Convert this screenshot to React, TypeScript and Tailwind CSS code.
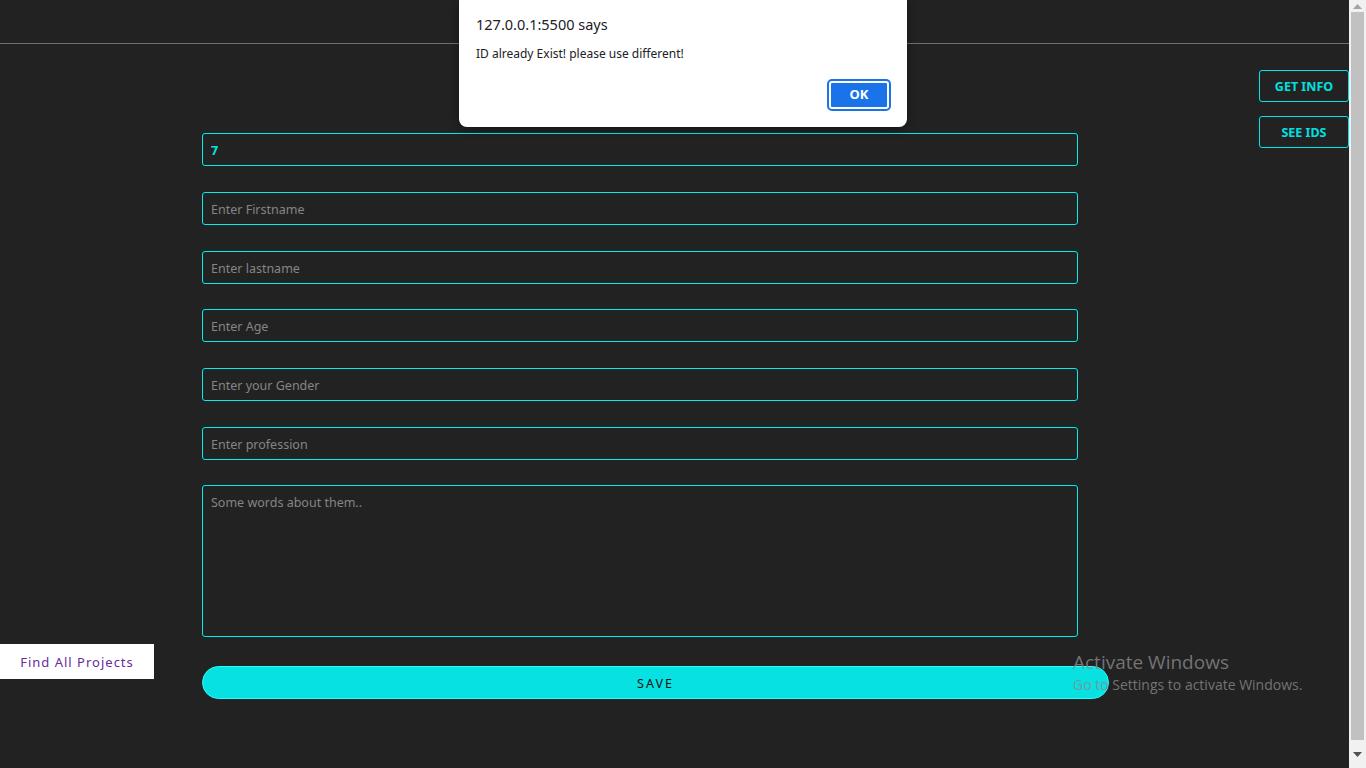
import React from 'react';

const fields = [
  { value: '7', placeholder: '' },
  { value: '', placeholder: 'Enter Firstname' },
  { value: '', placeholder: 'Enter lastname' },
  { value: '', placeholder: 'Enter Age' },
  { value: '', placeholder: 'Enter your Gender' },
  { value: '', placeholder: 'Enter profession' },
];

const App: React.FC = () => {
  return (
    <div className="flex h-screen w-full overflow-hidden bg-[#222222] font-['Noto_Sans','Open_Sans',sans-serif]">
      <main className="relative h-full w-[1349px] shrink-0">
        <header className="h-[44px] border-b border-[#6f6f6f]" />

        <div className="flex">
          {/* left side link */}
          <div className="w-[202px] shrink-0 pt-[600px]">
            <a className="flex h-[35px] w-[154px] items-center justify-center bg-white pt-[2px] text-[13px] tracking-[1px] text-[#6a2a9a]">
              Find All Projects
            </a>
          </div>

          {/* form */}
          <form className="flex w-[907px] shrink-0 flex-col pt-[89px]">
            <div className="flex flex-col gap-[25.8px]">
              {fields.map((f, i) => (
                <input
                  key={i}
                  readOnly
                  value={f.value}
                  placeholder={f.placeholder}
                  className="h-[33px] w-[876px] rounded-[3px] border border-[#00eeee] bg-transparent px-[8px] pt-[2px] text-[12.5px] font-bold text-[#00e6e6] outline-none placeholder:font-normal placeholder:text-[#858585]"
                />
              ))}
            </div>
            <textarea
              readOnly
              placeholder="Some words about them.."
              className="mt-[25px] h-[152px] w-[876px] resize-none rounded-[3px] border border-[#00eeee] bg-transparent px-[8px] py-[8px] text-[12.5px] text-[#00e6e6] outline-none placeholder:text-[#858585]"
            />
            <button
              type="button"
              className="mt-[29px] h-[33px] w-[907px] rounded-full border border-[#2ff] bg-[#07e1e1] pt-[3px] text-[12.5px] tracking-[2px] text-[#111]"
            >
              SAVE
            </button>
          </form>

          {/* right buttons */}
          <div className="ml-[150px] flex flex-col gap-[14px] pt-[26px]">
            <button className="h-[32px] w-[90px] rounded-[3px] border border-[#00e6e6] pt-[2px] text-[12.5px] font-bold text-[#00e0e0]">
              GET INFO
            </button>
            <button className="h-[32px] w-[90px] rounded-[3px] border border-[#00e6e6] pt-[2px] text-[12.5px] font-bold text-[#00e0e0]">
              SEE IDS
            </button>
          </div>
        </div>

        {/* alert dialog */}
        <div className="absolute left-[459px] top-0 h-[127px] w-[448px] rounded-b-[8px] bg-white shadow-[0_2px_10px_rgba(0,0,0,0.4)]">
          <div className="px-[17px] pt-[14px]">
            <p className="text-[14.5px] leading-[20px] text-[#202124]">127.0.0.1:5500 says</p>
            <p className="mt-[11px] text-[12px] leading-[17px] text-[#202124]">ID already Exist! please use different!</p>
          </div>
          <button className="absolute bottom-[18px] right-[18px] h-[28px] w-[60px] rounded-[3px] border-2 border-white bg-[#1a73e8] text-[13px] font-bold text-white ring-2 ring-[#1a73e8]">
            OK
          </button>
        </div>

        {/* windows watermark */}
        <div className="pointer-events-none absolute left-[1073px] top-[649px] font-['Open_Sans',sans-serif] text-[#8a8a8a]/80">
          <p className="text-[19px] leading-[26px]">Activate Windows</p>
          <p className="text-[14px] leading-[20px]">Go to Settings to activate Windows.</p>
        </div>
      </main>

      {/* scrollbar */}
      <div className="flex h-full w-[17px] flex-col items-center bg-[#f1f1f1]">
        <div className="flex h-[12px] items-center">
          <svg width="9" height="5" viewBox="0 0 9 5"><path d="M0 5L4.5 0L9 5Z" fill="#a3a3a3" /></svg>
        </div>
        <div className="w-[13px] flex-1 bg-[#c1c1c1]" />
        <div className="flex h-[28px] items-center">
          <svg width="9" height="5" viewBox="0 0 9 5"><path d="M0 0L4.5 5L9 0Z" fill="#505050" /></svg>
        </div>
      </div>
    </div>
  );
};

export default App;
